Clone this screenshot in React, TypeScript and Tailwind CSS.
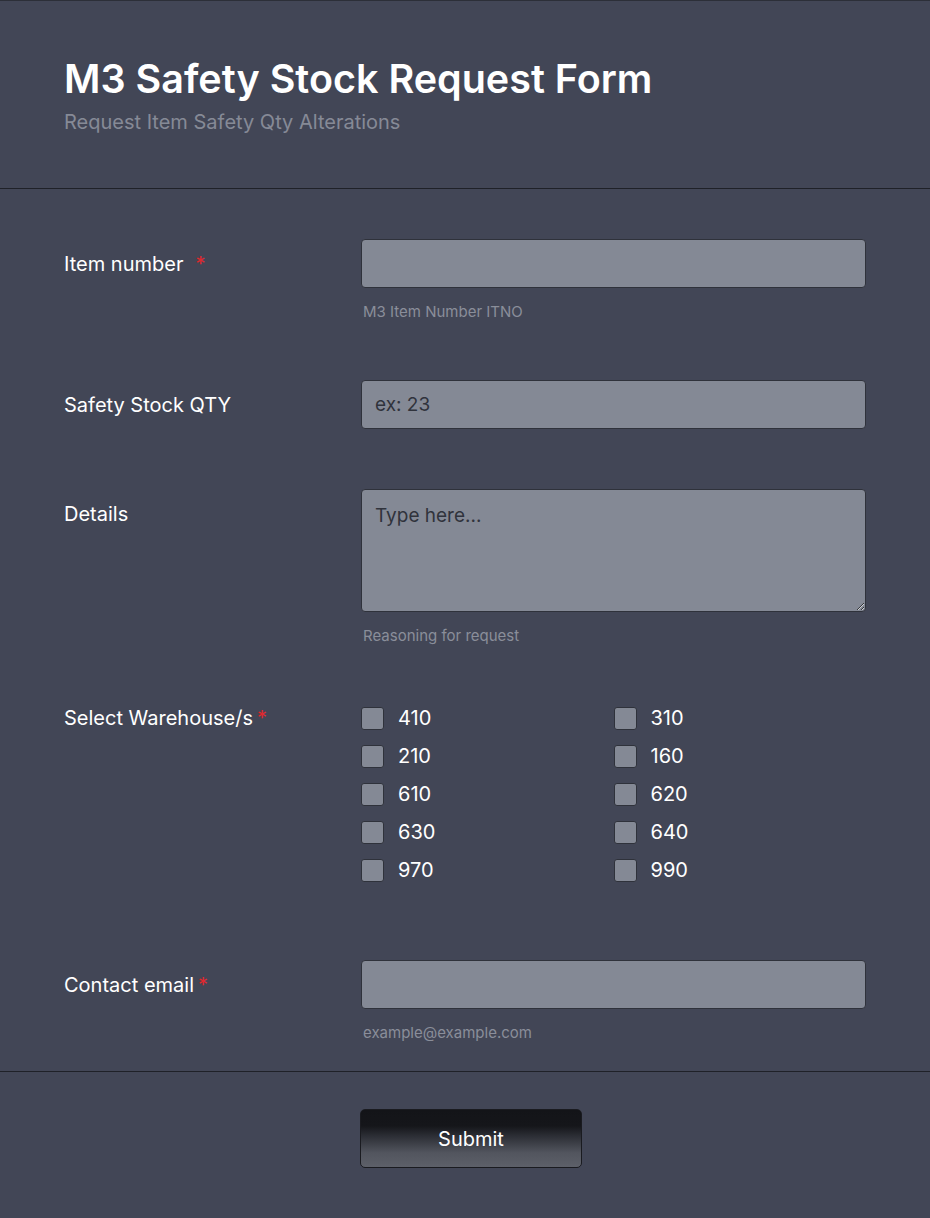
const warehouses = [
  ['410', '310'],
  ['210', '160'],
  ['610', '620'],
  ['630', '640'],
  ['970', '990'],
];

function Required({ wide }: { wide?: boolean }) {
  return <span className={`text-[#e0282e] ${wide ? 'ml-3' : 'ml-1'}`}>*</span>;
}

function Helper({ children }: { children: string }) {
  return <p className="mt-[14px] text-[15px] leading-5 text-[#8a8e9a] pl-0.5">{children}</p>;
}

function Checkbox({ label }: { label: string }) {
  return (
    <label className="flex items-center gap-[14px] h-[22px]">
      <span className="w-[23px] h-[23px] rounded-[3px] bg-[#848995] border border-[#2f323b]" />
      <span className="text-[20px] text-white">{label}</span>
    </label>
  );
}

const inputClass =
  'w-full h-[49px] rounded-[4px] bg-[#848995] border border-[#2f323b] px-[13px] text-[19px] text-[#2c2f38] placeholder:text-[#30333c] outline-none';

export default function App() {
  return (
    <div className="min-h-[1218px] bg-[#424656] border-t border-[#2c2f38] font-['Inter','Noto_Sans',sans-serif]">
      <header className="px-16 pt-[55px] pb-[52px] border-b border-[#1f2128]">
        <h1 className="text-[39.5px] leading-[46px] font-semibold text-white">M3 Safety Stock Request Form</h1>
        <p className="mt-[6px] text-[20px] leading-7 text-[#868a96]">Request Item Safety Qty Alterations</p>
      </header>

      <form className="px-16 pt-[50px] pb-[28px] border-b border-[#1f2128] flex flex-col">
        <div className="flex">
          <div className="w-[297px] h-[49px] flex items-center text-[20px] text-white">
            Item number
            <Required wide />
          </div>
          <div className="flex-1">
            <input className={inputClass} />
            <Helper>M3 Item Number ITNO</Helper>
          </div>
        </div>

        <div className="flex mt-[58px]">
          <div className="w-[297px] h-[49px] flex items-center text-[20px] text-white">Safety Stock QTY</div>
          <div className="flex-1">
            <input className={inputClass} placeholder="ex: 23" />
          </div>
        </div>

        <div className="flex mt-[60px]">
          <div className="w-[297px] h-[49px] flex items-center text-[20px] text-white">Details</div>
          <div className="flex-1">
            <textarea
              className="block w-full h-[123px] rounded-[4px] bg-[#848995] border border-[#2f323b] px-[13px] pt-[12px] pb-[10px] text-[19px] leading-[28px] text-[#2c2f38] placeholder:text-[#30333c] outline-none"
              placeholder="Type here..."
            />
            <Helper>Reasoning for request</Helper>
          </div>
        </div>

        <div className="flex mt-[61px] pb-[20px]">
          <div className="w-[297px] h-[22px] flex items-center text-[20px] text-white">
            Select Warehouse/s
            <Required />
          </div>
          <div className="flex-1 grid grid-cols-2 gap-y-[16px]">
            {warehouses.flat().map((w) => (
              <Checkbox key={w} label={w} />
            ))}
          </div>
        </div>

        <div className="flex mt-[59px]">
          <div className="w-[297px] h-[49px] flex items-center text-[20px] text-white">
            Contact email
            <Required />
          </div>
          <div className="flex-1">
            <input className={inputClass} />
            <Helper>example@example.com</Helper>
          </div>
        </div>
      </form>

      <div className="flex justify-center pl-[12px] pt-[37px] pb-[50px]">
        <button
          type="button"
          className="w-[222px] h-[59px] rounded-[5px] border border-[#1a1b20] bg-[linear-gradient(to_bottom,#131418_0%,#15161a_28%,#2b2d34_45%,#52555e_75%,#5d6069_100%)] text-[20px] text-white"
        >
          Submit
        </button>
      </div>
    </div>
  );
}
